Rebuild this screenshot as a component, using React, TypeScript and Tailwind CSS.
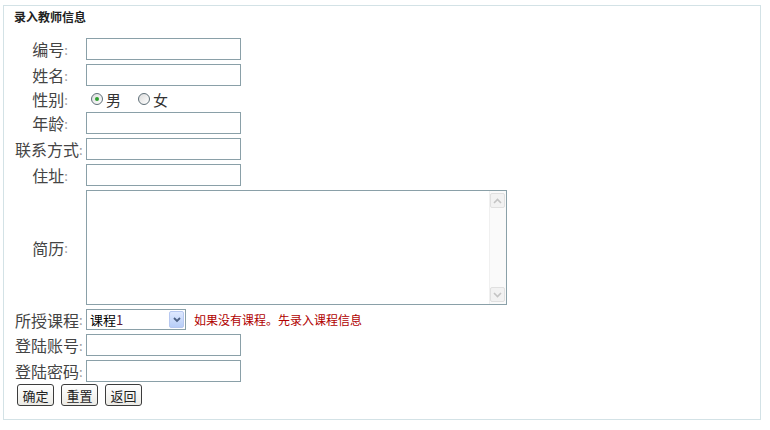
import React, { useState } from 'react'

const labelCls = 'flex items-center justify-center text-[16px] text-[#444] leading-none'
const inputCls = 'h-[22px] w-[155px] border border-[#8aa0a8] bg-white px-1 text-[13px] outline-none'

function Label({ text, wide }: { text: string; wide?: boolean }) {
  return (
    <div className={labelCls + (wide ? ' justify-start pl-[1px]' : '')}>
      <span>{text}</span>
      <span className="text-[13px] text-[#999]">:</span>
    </div>
  )
}

function Radio({ checked, label, onClick }: { checked: boolean; label: string; onClick: () => void }) {
  return (
    <div className="flex items-center cursor-pointer" onClick={onClick}>
      <span className="flex h-[12px] w-[12px] items-center justify-center rounded-full border border-[#5f6f78] bg-gradient-to-br from-[#dcdcdc] to-white">
        {checked ? <span className="h-[4px] w-[4px] rounded-full bg-[#2fa030]" /> : null}
      </span>
      <span className="ml-[3px] text-[15px] text-[#333] leading-none">{label}</span>
    </div>
  )
}

function ScrollButton({ up }: { up: boolean }) {
  return (
    <div className="flex h-[15px] w-[15px] items-center justify-center rounded-[2px] border border-[#e0e0e0] bg-[#f2f2f2]">
      <svg width="9" height="6" viewBox="0 0 9 6">
        <path
          d={up ? 'M1 5 L4.5 1.5 L8 5' : 'M1 1 L4.5 4.5 L8 1'}
          fill="none"
          stroke="#c4c4c4"
          strokeWidth="1.6"
        />
      </svg>
    </div>
  )
}

export default function App() {
  const [sex, setSex] = useState('男')

  return (
    <div className="h-[430px] w-[770px] bg-white pl-[3px] pt-[5px]" style={{ fontFamily: '"Noto Sans CJK SC", "Liberation Sans", sans-serif' }}>
      <div className="h-[415px] w-[758px] border border-[#d3e2e6]">
        <div className="pl-[10px] pt-[4px] text-[12px] font-bold leading-[14px] text-[#222]">录入教师信息</div>

        <div className="mt-[14px] grid grid-cols-[72px_auto] gap-y-[4px] pl-[10px]">
          <Label text="编号" />
          <input className={inputCls} />

          <Label text="姓名" />
          <input className={inputCls} />

          <Label text="性别" />
          <div className="flex h-[18px] items-center gap-[17px] pl-[5px]">
            <Radio checked={sex === '男'} label="男" onClick={() => setSex('男')} />
            <Radio checked={sex === '女'} label="女" onClick={() => setSex('女')} />
          </div>

          <Label text="年龄" />
          <input className={inputCls} />

          <Label text="联系方式" wide />
          <input className={inputCls} />

          <Label text="住址" />
          <input className={inputCls} />

          <Label text="简历" />
          <div className="flex h-[115px] w-[421px] border border-[#8aa0a8] bg-white">
            <textarea className="flex-1 resize-none p-1 text-[13px] outline-none" />
            <div className="flex w-[17px] flex-col justify-between border-l border-[#f0f0f0] bg-[#fafafa] py-[2px] pr-[1px]">
              <ScrollButton up />
              <ScrollButton up={false} />
            </div>
          </div>

          <Label text="所授课程" wide />
          <div className="flex items-center">
            <div className="flex h-[21px] w-[100px] items-center border border-[#8aa0a8] bg-white">
              <span className="flex-1 pl-[3px] text-[13px] leading-none text-black">
                课程<span className="text-[#5a1a3a]">1</span>
              </span>
              <div className="mr-[1px] flex h-[17px] w-[15px] items-center justify-center rounded-[2px] border border-[#b7c8f0] bg-gradient-to-b from-[#dfe9ff] to-[#b7cdf7]">
                <svg width="8" height="6" viewBox="0 0 8 6">
                  <path d="M1 1 L4 4 L7 1" fill="none" stroke="#4d6185" strokeWidth="1.8" />
                </svg>
              </div>
            </div>
            <span className="ml-[8px] text-[12px] leading-none text-[#b00000]">如果没有课程。先录入课程信息</span>
          </div>

          <Label text="登陆账号" wide />
          <input className={inputCls} />

          <Label text="登陆密码" wide />
          <input type="password" className={inputCls} />
        </div>

        <div className="mt-[2px] flex gap-[7px] pl-[13px]">
          {['确定', '重置', '返回'].map((t) => (
            <button
              key={t}
              className="flex h-[22px] w-[37px] items-center justify-center rounded-[3px] border border-[#3c3c3c] bg-gradient-to-b from-white to-[#ecebe6] text-[13px] leading-none text-[#222]"
            >
              {t}
            </button>
          ))}
        </div>
      </div>
    </div>
  )
}
